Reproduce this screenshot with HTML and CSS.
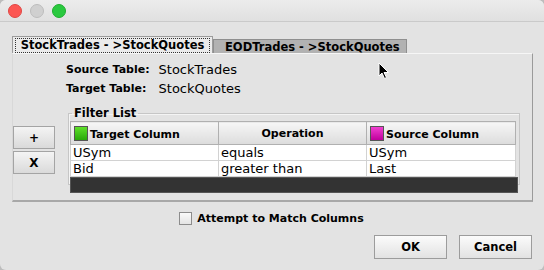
FILE: index.html
```html
<!DOCTYPE html>
<html>
<head>
    <link rel="stylesheet" href="styles.css">
</head>
<body>
    <div class="window">
        <div class="titlebar">
            <span class="light red"></span>
            <span class="light gray"></span>
            <span class="light green"></span>
        </div>

        <div class="tabs">
            <div class="tab selected"><span class="focus">StockTrades - &gt;StockQuotes</span></div>
            <div class="tab">EODTrades - &gt;StockQuotes</div>
        </div>

        <div class="panel">
            <div class="tables">
                <span class="label">Source Table:</span><span>StockTrades</span>
                <span class="label">Target Table:</span><span>StockQuotes</span>
            </div>

            <div class="filter-row">
                <div class="side-buttons">
                    <button class="small-button">+</button>
                    <button class="small-button">X</button>
                </div>

                <fieldset class="filter">
                    <legend>Filter List</legend>
                    <table>
                        <thead>
                            <tr>
                                <th class="col-target"><span class="swatch green-swatch"></span>Target Column</th>
                                <th class="col-op center">Operation</th>
                                <th><span class="swatch pink-swatch"></span>Source Column</th>
                            </tr>
                        </thead>
                        <tbody>
                            <tr><td>USym</td><td>equals</td><td>USym</td></tr>
                            <tr><td>Bid</td><td>greater than</td><td>Last</td></tr>
                        </tbody>
                    </table>
                    <div class="empty"></div>
                </fieldset>
            </div>
        </div>

        <div class="match">
            <span class="checkbox"></span>
            <span class="match-label">Attempt to Match Columns</span>
        </div>

        <div class="actions">
            <button class="button">OK</button>
            <button class="button">Cancel</button>
        </div>

        <!-- mouse pointer as captured -->
        <svg class="pointer" width="12" height="18" viewBox="0 0 12 18">
            <path d="M1 1 L1 14 L4 11 L6.5 16.5 L8.5 15.5 L6 10.5 L10.5 10.5 Z" fill="#000" stroke="#fff" stroke-width="1"/>
        </svg>
    </div>
</body>
</html>
```

FILE: styles.css
```css
body {
    margin: 0;
    padding: 0;
    background: #bdbdbd;
    font-family: "DejaVu Sans", sans-serif;
    font-size: 13px;
    color: #000;
}
.window {
    position: relative;
    width: 544px;
    height: 270px;
    background: #e3e3e3;
    border-radius: 6px;
    overflow: hidden;
    box-sizing: border-box;
}
.titlebar {
    height: 21px;
    border-bottom: 1px solid #cacaca;
    background: linear-gradient(#ececec, #e0e0e0);
    display: flex;
    align-items: center;
    gap: 8px;
    padding-left: 8px;
}
.light {
    width: 12px;
    height: 12px;
    border-radius: 50%;
}
.light.red { background: #fc5753; border: 0.5px solid #df4744; }
.light.gray { background: #d0d0d0; border: 0.5px solid #bcbcbc; }
.light.green { background: #2ac93f; border: 0.5px solid #1fad30; }

.tabs {
    display: flex;
    align-items: flex-end;
    margin: 14px 0 0 12px;
    height: 17px;
    font-size: 11.5px;
    font-weight: bold;
    white-space: nowrap;
}
.tab {
    height: 14px;
    width: 194px;
    box-sizing: border-box;
    padding-left: 11px;
    background: #b2b2b2;
    border: 1px solid #8f8f8f;
    border-bottom: none;
    line-height: 14px;
}
.tab.selected {
    height: 17px;
    width: 201px;
    padding: 0;
    background: #ebebeb;
    border-color: #9c9c9c;
    display: flex;
    align-items: center;
    justify-content: center;
}
.focus {
    border: 1px dotted #333;
    width: 193px;
    height: 13px;
    line-height: 13px;
    text-align: center;
}
.panel {
    margin-left: 12px;
    width: 519px;
    height: 146px;
    border-top: 1px solid #f6f6f6;
    border-left: 1px solid #d8d8d8;
    border-right: 1px solid #9a9a9a;
    border-bottom: 2px solid #a8a8a8;
}
.tables {
    display: grid;
    grid-template-columns: auto auto;
    justify-content: start;
    column-gap: 9px;
    row-gap: 4px;
    margin: 8px 0 0 53px;
    line-height: 15px;
}
.label {
    font-weight: bold;
    font-size: 11px;
}
.filter-row {
    display: flex;
    margin-top: 10px;
}
.side-buttons {
    display: flex;
    flex-direction: column;
    gap: 2px;
    margin: 20px 13px 0 0;
}
.small-button {
    width: 42px;
    height: 23px;
    font-family: "DejaVu Sans", sans-serif;
    font-weight: bold;
    font-size: 12px;
    background: linear-gradient(#f4f4f4, #dadada);
    border: 1px solid #a4a4a4;
    padding: 0;
}
.filter {
    width: 448px;
    height: 77px;
    margin: 0;
    padding: 0 1px;
    border: 1px solid #c6c6c6;
    box-shadow: inset 1px 1px 0 #f4f4f4;
}
.filter legend {
    font-weight: bold;
    font-size: 11.5px;
    padding: 0 2px;
    margin-left: 2px;
    line-height: 14px;
}
table {
    width: 446px;
    border-collapse: collapse;
    table-layout: fixed;
    margin-top: 1px;
}
th {
    height: 22px;
    padding: 0 3px;
    font-weight: bold;
    font-size: 11px;
    text-align: left;
    background: linear-gradient(#f6f6f6, #dcdcdc);
    border: 1px solid #b0b0b0;
    white-space: nowrap;
}
th.col-target { width: 141px; }
th.col-op { width: 141px; }
th.center { text-align: center; }
td {
    height: 15px;
    padding: 0 2px;
    background: #fff;
    border: 1px solid #d2d2d2;
    line-height: 15px;
}
.swatch {
    display: inline-block;
    width: 14px;
    height: 15px;
    vertical-align: -3px;
    margin-right: 2px;
    border: 1px solid #555;
    box-sizing: border-box;
}
.green-swatch { background: linear-gradient(#5ee02a, #2aa80a); }
.pink-swatch { background: linear-gradient(#f040d0, #c0009c); }
.empty {
    height: 16px;
    background: #333;
    border: 1px solid #555;
    box-sizing: border-box;
}
.match {
    display: flex;
    align-items: center;
    justify-content: center;
    gap: 5px;
    margin-top: 10px;
    padding-right: 1px;
}
.checkbox {
    width: 11px;
    height: 11px;
    background: linear-gradient(#fafafa, #e4e4e4);
    border: 1px solid #8c8c8c;
}
.match-label {
    font-weight: bold;
    font-size: 11px;
}
.actions {
    display: flex;
    justify-content: flex-end;
    gap: 12px;
    margin: 10px 12px 0 0;
}
.button {
    width: 73px;
    height: 24px;
    font-family: "DejaVu Sans", sans-serif;
    font-weight: bold;
    font-size: 11.5px;
    background: linear-gradient(#fbfbfb, #e2e2e2);
    border: 1px solid #9c9c9c;
    padding: 0;
}
.pointer {
    position: absolute;
    left: 378px;
    top: 62px;
}
```
